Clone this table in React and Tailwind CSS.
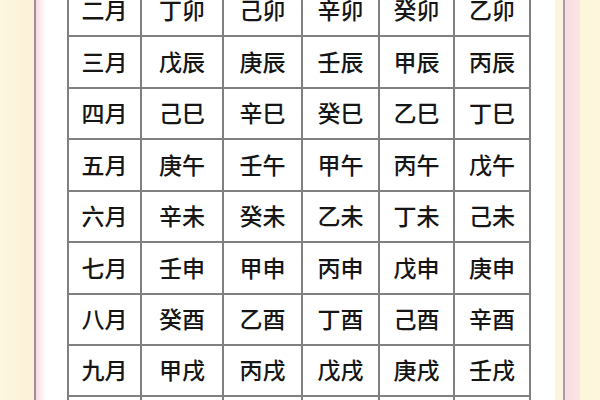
const rows = [
  ["二月", "丁卯", "己卯", "辛卯", "癸卯", "乙卯"],
  ["三月", "戊辰", "庚辰", "壬辰", "甲辰", "丙辰"],
  ["四月", "己巳", "辛巳", "癸巳", "乙巳", "丁巳"],
  ["五月", "庚午", "壬午", "甲午", "丙午", "戊午"],
  ["六月", "辛未", "癸未", "乙未", "丁未", "己未"],
  ["七月", "壬申", "甲申", "丙申", "戊申", "庚申"],
  ["八月", "癸酉", "乙酉", "丁酉", "己酉", "辛酉"],
  ["九月", "甲戌", "丙戌", "戊戌", "庚戌", "壬戌"],
  ["十月", "乙亥", "丁亥", "己亥", "辛亥", "癸亥"],
];

const widths = ["w-[73px]", "w-[82px]", "w-[79px]", "w-[77px]", "w-[75px]", "w-[76px]"];

export default function App() {
  return (
    <div
      className="flex h-[400px] w-[600px] overflow-hidden bg-[#fdf6dd]"
      style={{ fontFamily: '"Noto Sans CJK SC", "Noto Sans", sans-serif' }}
    >
      <div className="w-[34px] shrink-0 bg-gradient-to-r from-[#fdf7e0] to-[#fcf0d8]" />
      <div className="w-[2px] shrink-0 bg-[#9b8e99]" />
      <div className="w-[10px] shrink-0 bg-gradient-to-r from-[#f8d9e2] to-white" />
      <div className="w-[509px] shrink-0 bg-white pl-[21px]">
        <div className="-mt-[14px] border-l-2 border-[#808080]">
          {rows.map((row, i) => (
            <div key={i} className="flex h-[51.43px]">
              {row.map((cell, j) => (
                <div
                  key={j}
                  className={`${widths[j]} flex shrink-0 items-center justify-center border-r-2 border-b-2 border-[#808080] pb-[2px] text-[23px] font-medium text-[#161616]`}
                >
                  {cell}
                </div>
              ))}
            </div>
          ))}
        </div>
      </div>
      <div className="w-[8px] shrink-0 bg-[#fbf4de]" />
      <div className="w-[2px] shrink-0 bg-[#a89ca6]" />
      <div className="w-[15px] shrink-0 bg-gradient-to-r from-[#f9dbe4] to-[#fbe6e2]" />
      <div className="flex-1 bg-[#fdf5dc]" />
    </div>
  );
}
